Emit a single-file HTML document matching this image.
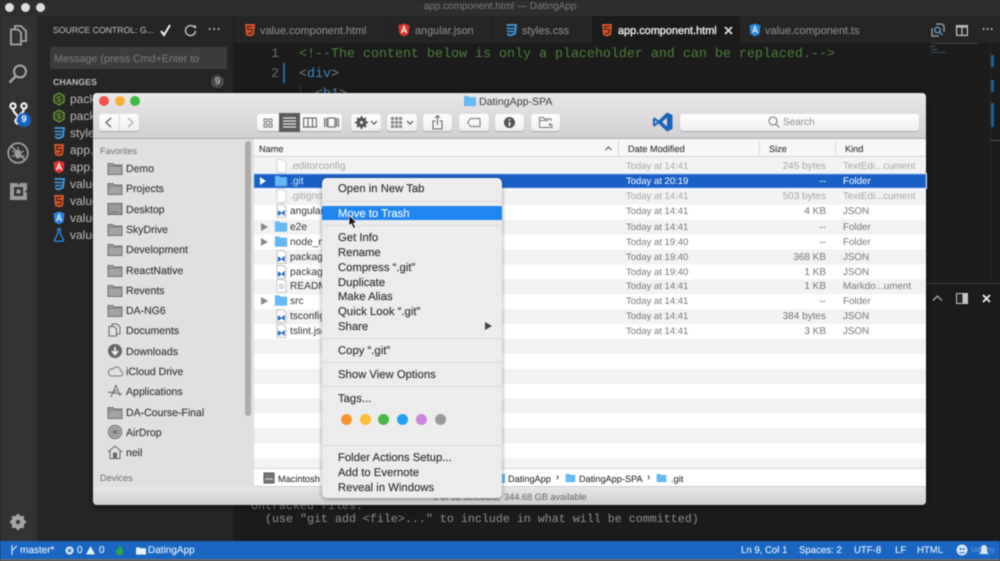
<!DOCTYPE html>
<html><head><meta charset="utf-8"><title>DatingApp</title>
<style>
html,body{margin:0;padding:0;background:#1b1b1b}
#r{position:relative;width:1000px;height:561px;overflow:hidden;background:#1b1b1b;font-family:"Liberation Sans",sans-serif;filter:blur(.4px);text-rendering:geometricPrecision}
#r div,#r span.a,#r svg.a{position:absolute}
.t{white-space:nowrap;line-height:14px;height:14px;margin-top:1px}
.tab{top:23px;font-size:10.9px;color:#858585;-webkit-text-stroke:.15px #858585}
.scm{left:70px;font-size:12px;color:#bbb}
.side{left:126px;font-size:10.500px;color:#3a3a3a;-webkit-text-stroke:.15px #3a3a3a;margin-top:2px}
.fi{left:107px;width:16px;height:14px}
.m{left:338px;font-size:11.300px;color:#333;-webkit-text-stroke:.15px #333;margin-top:2px}
.sep{left:323px;width:178px;height:1px;background:#d8d8d8}
.d{left:626px;font-size:9.500px;color:#777;margin-top:2px}
.s{left:726px;width:100px;text-align:right;font-size:10px;color:#777;margin-top:2px}
.k{left:843px;font-size:9.800px;color:#777;margin-top:2px}
.n{left:290px;font-size:10.200px;color:#333;margin-top:2px}
.h{top:141px;font-size:9.200px;color:#333;-webkit-text-stroke:.1px #333}
.p{top:471px;font-size:9.200px;color:#333;-webkit-text-stroke:.1px #333}
.b{top:114px;height:17px;background:linear-gradient(#fdfdfd,#efefef);border-radius:3px;box-shadow:0 1px 1px #aaa}
.st{top:543px;font-size:9.600px;color:#e8f0fa;-webkit-text-stroke:.1px #e8f0fa}
.mono{font-family:"Liberation Mono",monospace}
</style></head><body>
<svg width="0" height="0" style="position:absolute">
<defs>
<symbol id="gf" viewBox="0 0 16 14"><path d="M1 2.500h5l1 1.500h8v9.500H1z" fill="#a5a3a2" stroke="#757372" stroke-width="1"/><path d="M1.500 5h13" stroke="#807e7d"/></symbol>
<symbol id="bf" viewBox="0 0 16 14"><path d="M1 2a1 1 0 0 1 1-1h4l1 1.500h7a1 1 0 0 1 1 1V13H1z" fill="#64b9f4"/></symbol>
<symbol id="jf" viewBox="0 0 12 15"><path d="M1 .5h7l3 3v11H1z" fill="#fff" stroke="#aaa" stroke-width=".8"/><path d="M3 7l3 2.500L9.500 6v7L6 10l-3 2.500L2 12V8z" fill="#1a6dbb"/></symbol>
<symbol id="ef" viewBox="0 0 12 15"><path d="M1 .5h7l3 3v11H1z" fill="#fdfdfd" stroke="#c9c9c9" stroke-width=".8"/></symbol>
<symbol id="h5" viewBox="0 0 12 14"><path d="M1 1h10l-1 11-4 1.500L2 12z" fill="#d9542a"/><path d="M8.500 3.500h-5l.2 3h4.500l-.3 3.500L6 10.800 3.900 10" fill="none" stroke="#2a1b17" stroke-width="1"/></symbol>
<symbol id="ng" viewBox="0 0 12 14"><path d="M6 .5l5.500 2-1 8.500L6 13.500 1.500 11l-1-8.500z" fill="#e0352f"/><path d="M3.500 10L6 3.500 8.500 10M4.500 8h3" fill="none" stroke="#fff" stroke-width="1.100"/></symbol>
<symbol id="nga" viewBox="0 0 12 14"><path d="M6 .5l5.500 2-1 8.500L6 13.500 1.500 11l-1-8.500z" fill="#2b87dd"/><path d="M3.500 10L6 3.500 8.500 10M4.500 8h3" fill="none" stroke="#dfeefc" stroke-width="1.100"/></symbol>
<symbol id="cs" viewBox="0 0 12 14"><path d="M1.500 2h9.500l-1 8.500-4.500 2-3.500-1.500" fill="none" stroke="#3d9be5" stroke-width="1.800"/><path d="M1.500 5.500h8M2 8.500h7" stroke="#3d9be5" stroke-width="1.600"/></symbol>
<symbol id="nd" viewBox="0 0 12 14"><path d="M6 1l5 3v6l-5 3-5-3V4z" fill="#33401f" stroke="#6a9b35" stroke-width="1.300"/><path d="M7.500 5.200c-1-.7-3-.5-3 .8s3 .9 3 2.300c0 1.300-2 1.300-3.200.6" fill="none" stroke="#6a9b35" stroke-width=".9"/></symbol>
</defs>
</svg>
<div id="r">
<!-- title bar -->
<div style="left:0;top:0;width:1000px;height:16px;background:#2e2e2e"></div>
<div style="left:5px;top:3px;width:9px;height:9px;border-radius:50%;background:#ddd"></div>
<div style="left:21px;top:3px;width:9px;height:9px;border-radius:50%;background:#ddd"></div>
<div style="left:36px;top:3px;width:9px;height:9px;border-radius:50%;background:#ddd"></div>
<div class="t" style="left:0;top:-1px;width:1000px;text-align:center;font-size:10px;color:#7c7c7c">app.component.html — DatingApp</div>

<!-- activity bar -->
<div style="left:0;top:16px;width:37px;height:525px;background:#333"></div>
<svg class="a" style="left:8px;top:24px" width="20" height="22" viewBox="0 0 20 22" fill="none" stroke="#a6a6a6" stroke-width="1.800"><path d="M7 5V2h6l5 5v10h-4"/><path d="M3 5.500h7l3 3V20.500H3z"/></svg>
<svg class="a" style="left:8px;top:64px" width="20" height="20" viewBox="0 0 20 20" fill="none" stroke="#a6a6a6" stroke-width="2"><circle cx="12" cy="7.500" r="6"/><path d="M8 12l-6.500 6.500" stroke-width="2.400"/></svg>
<svg class="a" style="left:9px;top:102px" width="20" height="24" viewBox="0 0 20 24" fill="none" stroke="#f2f2f2" stroke-width="2.200"><circle cx="4" cy="4" r="2.600"/><circle cx="15" cy="4" r="2.600"/><circle cx="9" cy="19" r="2.600"/><path d="M4 7c0 4 5 5 5 9.500M15 7c0 3-3 4.500-5 6.500"/></svg>
<div style="left:17px;top:113px;width:14px;height:14px;border-radius:50%;background:#1565c0;color:#fff;font-size:9.500px;line-height:14px;text-align:center;font-weight:bold">9</div>
<svg class="a" style="left:7px;top:142px" width="22" height="22" viewBox="0 0 22 22" fill="none" stroke="#9a9a9a" stroke-width="1.800"><circle cx="11" cy="11" r="9.800"/><path d="M4 4l14 14"/><ellipse cx="11" cy="12" rx="3.500" ry="4.500" fill="#9a9a9a" stroke="none"/><path d="M11 5v3M5 9l3 1.500M17 9l-3 1.500M4.500 14h3M14.500 14h3" stroke-width="1.200"/></svg>
<svg class="a" style="left:10px;top:183px" width="17" height="17" viewBox="0 0 17 17"><path fill-rule="evenodd" d="M0 0h7.500v1.500h2V0H17v7.500h-1.500v2H17V17H0zM4 4v9h9V4z" fill="#9a9a9a"/><path d="M6.500 6.500h4v4h-4z" fill="#9a9a9a"/></svg>
<svg class="a" style="left:10px;top:514px" width="16" height="16" viewBox="0 0 16 16"><circle cx="8" cy="8" r="5.200" fill="none" stroke="#a6a6a6" stroke-width="3"/><path d="M8 0v16M0 8h16M2.300 2.300l11.400 11.400M13.700 2.300L2.300 13.700" stroke="#a6a6a6" stroke-width="2.400"/><circle cx="8" cy="8" r="2" fill="#333"/></svg>

<!-- scm sidebar -->
<div style="left:37px;top:16px;width:196px;height:525px;background:#252525"></div>
<div class="t" style="left:53px;top:22px;font-size:8.700px;color:#b4b4b4;-webkit-text-stroke:.1px #b4b4b4">SOURCE CONTROL: G...</div>
<svg class="a" style="left:159px;top:24px" width="13" height="13" viewBox="0 0 13 13" fill="none" stroke="#eee" stroke-width="2"><path d="M2 7l3 4 6-10"/></svg>
<svg class="a" style="left:184px;top:24px" width="13" height="13" viewBox="0 0 13 13" fill="none" stroke="#c5c5c5" stroke-width="1.400"><path d="M10.500 3.500a5 5 0 1 0 1 3.500"/><path d="M7.500 1.500h4.500v3.500z" fill="#c5c5c5" stroke="none"/></svg>
<div class="t" style="left:208px;top:21px;font-size:12px;font-weight:bold;color:#c5c5c5;letter-spacing:.5px">···</div>
<div style="left:50px;top:47px;width:177px;height:22px;background:#3c3c3c"></div>
<div class="t" style="left:54px;top:51px;font-size:10.700px;color:#7a7a7a">Message (press Cmd+Enter to</div>
<div class="t" style="left:53px;top:74px;font-size:8.800px;font-weight:bold;color:#bdbdbd">CHANGES</div>
<div style="left:211px;top:75px;width:13px;height:13px;border-radius:50%;background:#4a4a4a;color:#ddd;font-size:9.500px;line-height:13px;text-align:center">9</div>
<svg class="a" style="left:53px;top:92px" width="12" height="14"><use href="#nd"/></svg><div class="t scm" style="top:91px">package.json</div>
<svg class="a" style="left:53px;top:109px" width="12" height="14"><use href="#nd"/></svg><div class="t scm" style="top:108px">package-lock.json</div>
<svg class="a" style="left:53px;top:126px" width="12" height="14"><use href="#cs"/></svg><div class="t scm" style="top:125px">styles.css</div>
<svg class="a" style="left:53px;top:143px" width="12" height="14"><use href="#h5"/></svg><div class="t scm" style="top:142px">app.component.html</div>
<svg class="a" style="left:53px;top:160px" width="12" height="14"><use href="#ng"/></svg><div class="t scm" style="top:159px">app.module.ts</div>
<svg class="a" style="left:53px;top:177px" width="12" height="14"><use href="#cs"/></svg><div class="t scm" style="top:176px">value.component.css</div>
<svg class="a" style="left:53px;top:194px" width="12" height="14"><use href="#h5"/></svg><div class="t scm" style="top:193px">value.component.html</div>
<svg class="a" style="left:53px;top:211px" width="12" height="14"><use href="#nga"/></svg><div class="t scm" style="top:210px">value.component.ts</div>
<svg class="a" style="left:53px;top:228px" width="12" height="14" viewBox="0 0 12 14" fill="none" stroke="#2b87dd" stroke-width="1.400"><path d="M4 1h4M5 1v4l-3.500 7a1 1 0 0 0 1 1.300h7a1 1 0 0 0 1-1.300L7 5V1"/></svg><div class="t scm" style="top:227px">value.component.spec.ts</div>

<!-- tabs -->
<div style="left:233px;top:16px;width:767px;height:27px;background:#252525"></div>
<div style="left:233px;top:16px;width:1px;height:27px;background:#1e1e1e"></div>
<div style="left:389px;top:16px;width:1px;height:27px;background:#1e1e1e"></div>
<div style="left:491px;top:16px;width:1px;height:27px;background:#1e1e1e"></div>
<div style="left:592px;top:16px;width:148px;height:27px;background:#1b1b1b"></div>
<svg class="a" style="left:244px;top:23px" width="12" height="14"><use href="#h5"/></svg><div class="t tab" style="left:260px">value.component.html</div>
<svg class="a" style="left:398px;top:23px" width="12" height="14"><use href="#ng"/></svg><div class="t tab" style="left:415px">angular.json</div>
<svg class="a" style="left:505px;top:23px" width="12" height="14"><use href="#cs"/></svg><div class="t tab" style="left:522px">styles.css</div>
<svg class="a" style="left:601px;top:23px" width="12" height="14"><use href="#h5"/></svg><div class="t tab" style="left:618px;color:#eee;-webkit-text-stroke:.35px #eee">app.component.html</div>
<svg class="a" style="left:724px;top:26px" width="9" height="9" viewBox="0 0 9 9" stroke="#ddd" stroke-width="1.800"><path d="M1 1l7 7M8 1l-7 7"/></svg>
<svg class="a" style="left:749px;top:23px" width="12" height="14"><use href="#nga"/></svg><div class="t tab" style="left:765px">value.component.ts</div>
<svg class="a" style="left:931px;top:23px" width="14" height="14" viewBox="0 0 14 14" fill="none" stroke="#aaa" stroke-width="1.200"><path d="M1 5v8h7M5 1h6l2 2v6"/><circle cx="6.500" cy="7" r="2.800" stroke="#6aa8dd"/><path d="M8.500 9l3 3" stroke="#6aa8dd"/></svg>
<svg class="a" style="left:956px;top:25px" width="12" height="11" viewBox="0 0 12 11" fill="none" stroke="#c5c5c5" stroke-width="1.200"><rect x=".6" y=".6" width="10.800" height="9.800"/><path d="M6 .6v10M.6 2h10.800"/></svg>
<div class="t" style="left:982px;top:21px;font-size:12px;font-weight:bold;color:#c5c5c5">···</div>

<!-- editor -->
<div class="t mono" style="left:271px;top:47px;font-size:13.330px;color:#6a6a6a">1</div>
<div class="t mono" style="left:271px;top:67px;font-size:13.330px;color:#6a6a6a">2</div>
<div style="left:283px;top:63px;width:2px;height:20px;background:#1c6ea4"></div>
<div style="left:300px;top:84px;width:1px;height:10px;background:#3a3a3a"></div>
<div class="t mono" style="left:299px;top:47px;font-size:13.330px;color:#4d7f3b">&lt;!--The content below is only a placeholder and can be replaced.--&gt;</div>
<div class="t mono" style="left:299px;top:67px;font-size:13.330px;color:#808080">&lt;<span style="color:#3f86c4">div</span>&gt;</div>
<div class="t mono" style="left:315px;top:87px;font-size:13.330px;color:#808080">&lt;<span style="color:#3f86c4">h1</span>&gt;</div>
<div style="left:932px;top:43px;width:46px;height:1px;background:#38442f"></div>
<div style="left:930px;top:46px;width:5px;height:1px;background:#3a5a78"></div>
<div style="left:931px;top:49px;width:7px;height:1px;background:#3a5a78"></div>
<div style="left:931px;top:52px;width:16px;height:1px;background:#2f4a63"></div>
<div style="left:990px;top:43px;width:1px;height:240px;background:#2a2a2a"></div>
<div style="left:991px;top:55px;width:3px;height:12px;background:#15609a"></div>
<div style="left:991px;top:80px;width:3px;height:12px;background:#15609a"></div>
<div style="left:991px;top:103px;width:3px;height:24px;background:#15609a"></div>
<div style="left:991px;top:140px;width:9px;height:1px;background:#555"></div>

<!-- panel -->
<div style="left:926px;top:283px;width:74px;height:1px;background:#3a3a3a"></div>
<svg class="a" style="left:932px;top:294px" width="11" height="8" viewBox="0 0 11 8" fill="none" stroke="#aaa" stroke-width="1.300"><path d="M1 6.500l4.500-4.500 4.500 4.500"/></svg>
<svg class="a" style="left:956px;top:293px" width="12" height="11" viewBox="0 0 12 11"><rect x=".5" y=".5" width="11" height="10" fill="#252525" stroke="#c5c5c5"/><rect x="6.500" y="1" width="5" height="9" fill="#c5c5c5"/></svg>
<svg class="a" style="left:982px;top:294px" width="9" height="9" viewBox="0 0 9 9" stroke="#eee" stroke-width="1.900"><path d="M1 1l7 7M8 1l-7 7"/></svg>
<div class="t mono" style="left:251px;top:498px;font-size:11.670px;color:#8a8a8a">Untracked files:</div>
<div class="t mono" style="left:265px;top:511px;font-size:11.670px;color:#909090">(use "git add &lt;file&gt;..." to include in what will be committed)</div>

<!-- status bar -->
<div style="left:0;top:541px;width:1000px;height:17.500px;background:#1a66c2"></div>
<div style="left:0;top:558.500px;width:1000px;height:3px;background:#6e6e6e"></div>
<svg class="a" style="left:10px;top:544px" width="8" height="12" viewBox="0 0 8 12" fill="none" stroke="#d8e6f7" stroke-width="1.100"><path d="M2 1v10M6.500 1.500c0 3-4.500 3-4.500 6"/></svg>
<div class="t st" style="left:20px;font-size:10px">master*</div>
<svg class="a" style="left:65px;top:545.500px" width="9" height="9" viewBox="0 0 10 10"><circle cx="5" cy="5" r="4.500" fill="#e8f0fa"/><path d="M3 3l4 4M7 3l-4 4" stroke="#1a66c2" stroke-width="1.300"/></svg>
<div class="t st" style="left:77px;font-size:10px">0</div>
<svg class="a" style="left:86px;top:546px" width="9" height="8.500" viewBox="0 0 11 10"><path d="M5.500 0l5.500 10H0z" fill="#e8f0fa"/></svg>
<div class="t st" style="left:99px;font-size:10px">0</div>
<svg class="a" style="left:114.500px;top:544px" width="9" height="12" viewBox="0 0 10 12"><path d="M5 0c1 2 4 4 4 7.500S7 12 5 12s-4-1.500-4-4.500c0-1.500.8-2.500 1.500-3 0 1 .5 1.500 1 1.500C4.500 4.500 4 2 5 0z" fill="#2aa84a"/></svg>
<svg class="a" style="left:136px;top:545.500px" width="10" height="9" viewBox="0 0 11 9"><path d="M0 1h4l1 1h6v7H0z" fill="#e8f0fa"/></svg>
<div class="t st" style="left:148px;font-size:10px">DatingApp</div>
<div class="t st" style="left:741px">Ln 9, Col 1</div>
<div class="t st" style="left:799px">Spaces: 2</div>
<div class="t st" style="left:854px">UTF-8</div>
<div class="t st" style="left:895px">LF</div>
<div class="t st" style="left:917px">HTML</div>
<svg class="a" style="left:956px;top:544px" width="12" height="12" viewBox="0 0 12 12"><circle cx="6" cy="6" r="5.500" fill="#dbe6f2"/><circle cx="4.500" cy="5" r="1" fill="#1a66c2"/><circle cx="7.500" cy="5" r="1" fill="#1a66c2"/><path d="M3.500 8c1.500 1.300 3.500 1.300 5 0" stroke="#1a66c2" fill="none"/></svg>
<div class="t" style="left:971px;top:542px;font-size:7.500px;color:#7fa6d8">Udemy</div>
<svg class="a" style="left:979px;top:545px" width="10" height="11" viewBox="0 0 10 11"><path d="M5 0c2 0 3 1.500 3 3.500V7l2 2H0l2-2V3.500C2 1.500 3 0 5 0z" fill="#dbe6f2"/></svg>

<!-- finder window -->
<div style="left:93px;top:93px;width:833px;height:412px;background:#e2e0de;border-radius:4px;box-shadow:0 2px 6px rgba(0,0,0,.45);overflow:hidden">
 <div style="left:0;top:0;width:833px;height:45px;background:linear-gradient(#e9e7e9,#d2d0d2);border-bottom:1px solid #aeacae"></div>
 <div style="left:161px;top:46px;width:672px;height:18px;background:#f7f7f7;border-bottom:1px solid #d4d4d4;box-sizing:border-box"></div>
 <div style="left:161px;top:64px;width:672px;height:3px;background:#f2f2f2"></div>
 <div style="left:161px;top:66.800px;width:672px;height:308.200px;background:linear-gradient(#f2f2f2 50%,#fff 50%);background-size:100% 29.830px"></div>
 <div style="left:161px;top:375px;width:672px;height:19px;background:#fff;border-top:1px solid #d8d8d8;border-bottom:1px solid #cfcfcf;box-sizing:border-box"></div>
 <div style="left:0;top:393.500px;width:161px;height:1px;background:#d2d0ce"></div>
 <div style="left:0;top:394px;width:833px;height:18px;background:linear-gradient(#e8e6e8,#cfcdcf)"></div>
</div>
<!-- traffic lights -->
<div style="left:99px;top:96px;width:10px;height:10px;border-radius:50%;background:#f0524f"></div>
<div style="left:115px;top:96px;width:10px;height:10px;border-radius:50%;background:#f6b03a"></div>
<div style="left:130px;top:96px;width:10px;height:10px;border-radius:50%;background:#3dbb45"></div>
<svg class="a" style="left:463px;top:95px" width="14" height="12"><use href="#bf"/></svg>
<div class="t" style="left:479px;top:94px;font-size:10.600px;color:#3c3c3c">DatingApp-SPA</div>
<!-- toolbar -->
<div class="b" style="left:99px;width:40px"></div>
<div style="left:119px;top:114px;width:1px;height:17px;background:#d4d4d4"></div>
<svg class="a" style="left:104px;top:117px" width="9" height="11" viewBox="0 0 9 11" fill="none" stroke="#666" stroke-width="1.300"><path d="M7 1L2 5.500 7 10"/></svg>
<svg class="a" style="left:126px;top:117px" width="9" height="11" viewBox="0 0 9 11" fill="none" stroke="#aaa" stroke-width="1.300"><path d="M2 1l5 4.500L2 10"/></svg>
<div class="b" style="left:257px;width:85px"></div>
<div style="left:279px;top:113px;width:21px;height:19px;background:#5a5a5a"></div>
<svg class="a" style="left:263px;top:118px" width="10" height="10" viewBox="0 0 10 10" fill="none" stroke="#777"><rect x="1" y="1" width="3" height="3"/><rect x="6" y="1" width="3" height="3"/><rect x="1" y="6" width="3" height="3"/><rect x="6" y="6" width="3" height="3"/></svg>
<svg class="a" style="left:283px;top:117px" width="13" height="11" viewBox="0 0 13 11" stroke="#e8e8e8" stroke-width="1.200"><path d="M0 1h13M0 4h13M0 7h13M0 10h13"/></svg>
<svg class="a" style="left:303px;top:117px" width="14" height="11" viewBox="0 0 14 11" fill="none" stroke="#666" stroke-width="1.100"><rect x=".6" y="1" width="12.800" height="9"/><path d="M5 1v9M9.500 1v9"/></svg>
<svg class="a" style="left:324px;top:117px" width="15" height="11" viewBox="0 0 15 11" fill="none" stroke="#666" stroke-width="1.100"><rect x="4" y="1" width="7" height="9"/><path d="M.6 1v9M2.500 1v9M12.500 1v9M14.400 1v9"/></svg>
<div class="b" style="left:351px;width:30px"></div>
<svg class="a" style="left:355px;top:116px" width="13" height="13" viewBox="0 0 13 13"><circle cx="6.500" cy="6.500" r="3.800" fill="none" stroke="#555" stroke-width="2.400"/><path d="M6.500 0v13M0 6.500h13M2 2l9 9M11 2l-9 9" stroke="#555" stroke-width="1.700"/><circle cx="6.500" cy="6.500" r="1.500" fill="#f4f4f4"/></svg>
<svg class="a" style="left:370px;top:120px" width="8" height="5" viewBox="0 0 8 5" fill="none" stroke="#555" stroke-width="1.200"><path d="M1 1l3 3 3-3"/></svg>
<div class="b" style="left:387px;width:30px"></div>
<svg class="a" style="left:391px;top:117px" width="12" height="11" viewBox="0 0 12 11" fill="#888"><path d="M0 0h3v3H0zM4 0h3v3H4zM8 0h3v3H8zM0 4h3v3H0zM4 4h3v3H4zM8 4h3v3H8zM0 8h3v3H0zM4 8h3v3H4zM8 8h3v3H8z"/></svg>
<svg class="a" style="left:406px;top:120px" width="8" height="5" viewBox="0 0 8 5" fill="none" stroke="#555" stroke-width="1.200"><path d="M1 1l3 3 3-3"/></svg>
<div class="b" style="left:423px;width:29px"></div>
<svg class="a" style="left:432px;top:115px" width="11" height="15" viewBox="0 0 11 15" fill="none" stroke="#666" stroke-width="1.100"><path d="M3.500 6H1v8h9V6H7.500M5.500 10V1M3 3l2.500-2.500L8 3"/></svg>
<div class="b" style="left:459px;width:30px"></div>
<svg class="a" style="left:467px;top:118px" width="14" height="9" viewBox="0 0 14 9" fill="none" stroke="#777"><path d="M3.500 .5H13v8H3.500L.6 4.500z"/></svg>
<div class="b" style="left:495px;width:29px"></div>
<svg class="a" style="left:504px;top:117px" width="11" height="11" viewBox="0 0 11 11"><circle cx="5.500" cy="5.500" r="5.500" fill="#555"/><path d="M5.500 2v1.500M5.500 5v4" stroke="#f4f4f4" stroke-width="1.700"/></svg>
<div class="b" style="left:531px;width:29px"></div>
<svg class="a" style="left:539px;top:117px" width="14" height="11" viewBox="0 0 14 11" fill="none" stroke="#777"><path d="M.5 10.500V.5h4l1 1.500H12v2M.5 3.500h9M.5 10.500H13V7M11 6v3M9.500 7.500h3"/></svg>
<svg class="a" style="left:653px;top:112px" width="20" height="20" viewBox="0 0 20 20"><path d="M14 .5l5.500 2.500v14L14 19.500 5.500 11.500 1.800 14.500 0 13.500V6.500L1.800 5.500 5.500 8.500zM14 5.800L9 10l5 4.200zM2 8v4l2-2z" fill="#1b65b9"/></svg>
<div class="b" style="left:680px;width:239px"></div>
<svg class="a" style="left:768px;top:116px" width="12" height="12" viewBox="0 0 12 12" fill="none" stroke="#777" stroke-width="1.100"><circle cx="5" cy="5" r="4"/><path d="M8 8l3.500 3.500"/></svg>
<div class="t" style="left:783px;top:115px;font-size:10px;color:#8f8f8f">Search</div>

<!-- columns -->
<div class="t h" style="left:259px">Name</div>
<svg class="a" style="left:605px;top:146px" width="7" height="5" viewBox="0 0 7 5" fill="none" stroke="#555" stroke-width="1.100"><path d="M.6 4l2.900-3 2.900 3"/></svg>
<div style="left:618px;top:141px;width:1px;height:14px;background:#d5d5d5"></div>
<div style="left:759px;top:141px;width:1px;height:14px;background:#d5d5d5"></div>
<div style="left:835px;top:141px;width:1px;height:14px;background:#d5d5d5"></div>
<div class="t h" style="left:628px">Date Modified</div>
<div class="t h" style="left:769px">Size</div>
<div class="t h" style="left:845px">Kind</div>

<!-- finder sidebar -->
<div style="left:245px;top:141px;width:6px;height:275px;background:#aeacaa;border-radius:3px"></div>
<div class="t" style="left:100px;top:143px;font-size:9px;color:#6e6e6e">Favorites</div>
<svg class="a fi" style="top:161px"><use href="#gf"/></svg><div class="t side" style="top:160px">Demo</div>
<svg class="a fi" style="top:181px"><use href="#gf"/></svg><div class="t side" style="top:180px">Projects</div>
<svg class="a fi" style="top:202px" viewBox="0 0 16 14"><rect x="1" y="1.500" width="14" height="11" fill="#999" stroke="#666"/><path d="M4 10h8" stroke="#555" stroke-dasharray="1 1"/></svg><div class="t side" style="top:201px">Desktop</div>
<svg class="a fi" style="top:222px"><use href="#gf"/></svg><div class="t side" style="top:221px">SkyDrive</div>
<svg class="a fi" style="top:242px"><use href="#gf"/></svg><div class="t side" style="top:241px">Development</div>
<svg class="a fi" style="top:263px"><use href="#gf"/></svg><div class="t side" style="top:262px">ReactNative</div>
<svg class="a fi" style="top:283px"><use href="#gf"/></svg><div class="t side" style="top:282px">Revents</div>
<svg class="a fi" style="top:303px"><use href="#gf"/></svg><div class="t side" style="top:302px">DA-NG6</div>
<svg class="a fi" style="top:323px" viewBox="0 0 16 14" fill="none" stroke="#666"><path d="M5 3.500V1h5l3 3v7H9.500"/><path d="M2 3.500h5l2.500 2.500V13H2z"/></svg><div class="t side" style="top:322px">Documents</div>
<svg class="a fi" style="top:344px" viewBox="0 0 16 14"><circle cx="8" cy="7" r="7" fill="#666"/><path d="M8 3v6M5 7l3 3.500L11 7" stroke="#eee" stroke-width="1.800" fill="none"/></svg><div class="t side" style="top:343px">Downloads</div>
<svg class="a fi" style="top:364px" viewBox="0 0 16 14" fill="none" stroke="#777"><path d="M4 12h9a2.500 2.500 0 0 0 .5-5A4 4 0 0 0 6 5a3.500 3.500 0 0 0-2 7z"/></svg><div class="t side" style="top:363px">iCloud Drive</div>
<svg class="a fi" style="top:384px" viewBox="0 0 16 14" fill="none" stroke="#666"><path d="M4 13L9 1M9 1l4 11M1 8l14 2M6 8l4-2"/></svg><div class="t side" style="top:383px">Applications</div>
<svg class="a fi" style="top:405px"><use href="#gf"/></svg><div class="t side" style="top:404px">DA-Course-Final</div>
<svg class="a fi" style="top:425px" viewBox="0 0 16 14" fill="none" stroke="#666" stroke-width="1.200"><circle cx="8" cy="7" r="6.500"/><circle cx="8" cy="7" r="4.300"/><circle cx="8" cy="7" r="2.200"/><circle cx="8" cy="7" r=".8" fill="#666"/></svg><div class="t side" style="top:424px">AirDrop</div>
<svg class="a fi" style="top:445px" viewBox="0 0 16 14" fill="none" stroke="#666"><path d="M1 7l7-6 7 6M3 6v7.500h10V6"/><rect x="6.500" y="8" width="3" height="5.500" fill="#666"/></svg><div class="t side" style="top:444px">neil</div>
<div class="t" style="left:100px;top:470px;font-size:9.200px;color:#6e6e6e">Devices</div>

<!-- file rows -->
<div style="left:254px;top:174px;width:672px;height:14px;background:#1a5fc6;border:1px solid #2f77d8;box-sizing:border-box;outline:1px solid #dfe9f7"></div>
<svg class="a" style="left:276px;top:159px" width="11" height="14"><use href="#ef"/></svg><div class="t n" style="top:158px;color:#a8a8a8">.editorconfig</div>
<svg class="a" style="left:259px;top:177px" width="8" height="8" viewBox="0 0 8 8"><path d="M1 0l6 4-6 4z" fill="#fff"/></svg>
<svg class="a" style="left:274px;top:175px" width="14" height="12"><use href="#bf"/></svg><div class="t n" style="top:173px;color:#cfe0f7">.git</div>
<svg class="a" style="left:276px;top:189px" width="11" height="14"><use href="#ef"/></svg><div class="t n" style="top:188px;color:#a8a8a8">.gitignore</div>
<svg class="a" style="left:276px;top:204px" width="11" height="14"><use href="#jf"/></svg><div class="t n" style="top:203px">angular.json</div>
<svg class="a" style="left:261px;top:223px" width="7" height="8" viewBox="0 0 7 8"><path d="M0 0l7 4-7 4z" fill="#888"/></svg>
<svg class="a" style="left:274px;top:220px" width="14" height="13"><use href="#bf"/></svg><div class="t n" style="top:219px">e2e</div>
<svg class="a" style="left:261px;top:238px" width="7" height="8" viewBox="0 0 7 8"><path d="M0 0l7 4-7 4z" fill="#888"/></svg>
<svg class="a" style="left:274px;top:235px" width="14" height="13"><use href="#bf"/></svg><div class="t n" style="top:234px">node_modules</div>
<svg class="a" style="left:276px;top:250px" width="11" height="14"><use href="#jf"/></svg><div class="t n" style="top:249px">package-lock.json</div>
<svg class="a" style="left:276px;top:265px" width="11" height="14"><use href="#jf"/></svg><div class="t n" style="top:264px">package.json</div>
<svg class="a" style="left:276px;top:279px" width="11" height="14" viewBox="0 0 12 15"><path d="M1 .5h7l3 3v11H1z" fill="#fff" stroke="#bbb" stroke-width=".8"/><path d="M3 6h6M3 8h6M3 10h6" stroke="#9ab" stroke-width=".8"/></svg><div class="t n" style="top:278px">README.md</div>
<svg class="a" style="left:261px;top:297px" width="7" height="8" viewBox="0 0 7 8"><path d="M0 0l7 4-7 4z" fill="#888"/></svg>
<svg class="a" style="left:274px;top:294px" width="14" height="13"><use href="#bf"/></svg><div class="t n" style="top:293px">src</div>
<svg class="a" style="left:276px;top:309px" width="11" height="14"><use href="#jf"/></svg><div class="t n" style="top:308px">tsconfig.json</div>
<svg class="a" style="left:276px;top:324px" width="11" height="14"><use href="#jf"/></svg><div class="t n" style="top:323px">tslint.json</div>

<div class="t d" style="top:158px;color:#a8a8a8">Today at 14:41</div><div class="t s" style="top:158px;color:#a8a8a8">245 bytes</div><div class="t k" style="top:158px;color:#a8a8a8">TextEdi...cument</div>
<div class="t d" style="top:173px;color:#fff">Today at 20:19</div><div class="t s" style="top:173px;color:#fff">--</div><div class="t k" style="top:173px;color:#fff">Folder</div>
<div class="t d" style="top:188px;color:#a8a8a8">Today at 14:41</div><div class="t s" style="top:188px;color:#a8a8a8">503 bytes</div><div class="t k" style="top:188px;color:#a8a8a8">TextEdi...cument</div>
<div class="t d" style="top:203px">Today at 14:41</div><div class="t s" style="top:203px">4 KB</div><div class="t k" style="top:203px">JSON</div>
<div class="t d" style="top:219px">Today at 14:41</div><div class="t s" style="top:219px">--</div><div class="t k" style="top:219px">Folder</div>
<div class="t d" style="top:234px">Today at 19:40</div><div class="t s" style="top:234px">--</div><div class="t k" style="top:234px">Folder</div>
<div class="t d" style="top:249px">Today at 19:40</div><div class="t s" style="top:249px">368 KB</div><div class="t k" style="top:249px">JSON</div>
<div class="t d" style="top:264px">Today at 19:40</div><div class="t s" style="top:264px">1 KB</div><div class="t k" style="top:264px">JSON</div>
<div class="t d" style="top:278px">Today at 14:41</div><div class="t s" style="top:278px">1 KB</div><div class="t k" style="top:278px">Markdo...ument</div>
<div class="t d" style="top:293px">Today at 14:41</div><div class="t s" style="top:293px">--</div><div class="t k" style="top:293px">Folder</div>
<div class="t d" style="top:308px">Today at 14:41</div><div class="t s" style="top:308px">384 bytes</div><div class="t k" style="top:308px">JSON</div>
<div class="t d" style="top:323px">Today at 14:41</div><div class="t s" style="top:323px">3 KB</div><div class="t k" style="top:323px">JSON</div>

<!-- path bar -->
<svg class="a" style="left:263px;top:472px" width="12" height="12" viewBox="0 0 12 12"><rect x="1" y="1" width="10" height="10" fill="#777" stroke="#555"/><path d="M2 7h8" stroke="#ddd"/></svg>
<div class="t p" style="left:278px">Macintosh HD</div>
<svg class="a" style="left:496px;top:473px" width="9" height="10" viewBox="0 0 9 10"><path d="M0 1h9v9H0z" fill="#64b9f4"/></svg>
<div class="t p" style="left:508px">DatingApp</div>
<div class="t" style="left:556px;top:470px;font-size:10px;font-weight:bold;color:#555">›</div>
<svg class="a" style="left:565px;top:473px" width="11" height="10"><use href="#bf"/></svg>
<div class="t p" style="left:579px">DatingApp-SPA</div>
<div class="t" style="left:647px;top:470px;font-size:10px;font-weight:bold;color:#555">›</div>
<svg class="a" style="left:656px;top:473px" width="11" height="10"><use href="#bf"/></svg>
<div class="t p" style="left:671px">.git</div>
<div class="t" style="left:433px;top:489px;font-size:9.200px;color:#666">1 of 12 selected,</div>
<div class="t" style="left:504px;top:489px;font-size:9.200px;color:#666">344.68 GB available</div>

<!-- context menu -->
<div style="left:322px;top:178px;width:180px;height:319.500px;background:#ececec;border-radius:5px;box-shadow:0 1px 5px rgba(0,0,0,.4)"></div>
<div style="left:322px;top:206px;width:180px;height:14px;background:#1f86f0"></div>
<div class="t m" style="top:180px">Open in New Tab</div>
<div class="sep" style="top:201px"></div>
<div class="t m" style="top:205px;color:#f2f7fd;-webkit-text-stroke:.15px #f2f7fd">Move to Trash</div>
<div class="sep" style="top:224.500px"></div>
<div class="t m" style="top:229px">Get Info</div>
<div class="t m" style="top:244px">Rename</div>
<div class="t m" style="top:259px">Compress “.git”</div>
<div class="t m" style="top:274px">Duplicate</div>
<div class="t m" style="top:288px">Make Alias</div>
<div class="t m" style="top:303px">Quick Look “.git”</div>
<div class="t m" style="top:318px">Share</div>
<svg class="a" style="left:485px;top:322px" width="7" height="8" viewBox="0 0 7 8"><path d="M0 0l7 4-7 4z" fill="#444"/></svg>
<div class="sep" style="top:338px"></div>
<div class="t m" style="top:342px">Copy “.git”</div>
<div class="sep" style="top:362px"></div>
<div class="t m" style="top:366px">Show View Options</div>
<div class="sep" style="top:386px"></div>
<div class="t m" style="top:390px">Tags...</div>
<div style="left:341px;top:414px;width:11px;height:11px;border-radius:50%;background:#f79533"></div>
<div style="left:360px;top:414px;width:11px;height:11px;border-radius:50%;background:#f9bd36"></div>
<div style="left:378px;top:414px;width:11px;height:11px;border-radius:50%;background:#4cb748"></div>
<div style="left:397px;top:414px;width:11px;height:11px;border-radius:50%;background:#24a1f5"></div>
<div style="left:416px;top:414px;width:11px;height:11px;border-radius:50%;background:#cf84de"></div>
<div style="left:435px;top:414px;width:11px;height:11px;border-radius:50%;background:#9a9a9a"></div>
<div class="sep" style="top:445px"></div>
<div class="t m" style="top:449px">Folder Actions Setup...</div>
<div class="t m" style="top:464px">Add to Evernote</div>
<div class="t m" style="top:479px">Reveal in Windows</div>
<!-- cursor -->
<svg class="a" style="left:348px;top:215px" width="10" height="15" viewBox="0 0 10 15"><path d="M1 0v11l2.500-2.300L5.500 13.500l2-1L5.500 8H9z" fill="#111" stroke="#fff" stroke-width=".7"/></svg>
</div>
</body></html>
